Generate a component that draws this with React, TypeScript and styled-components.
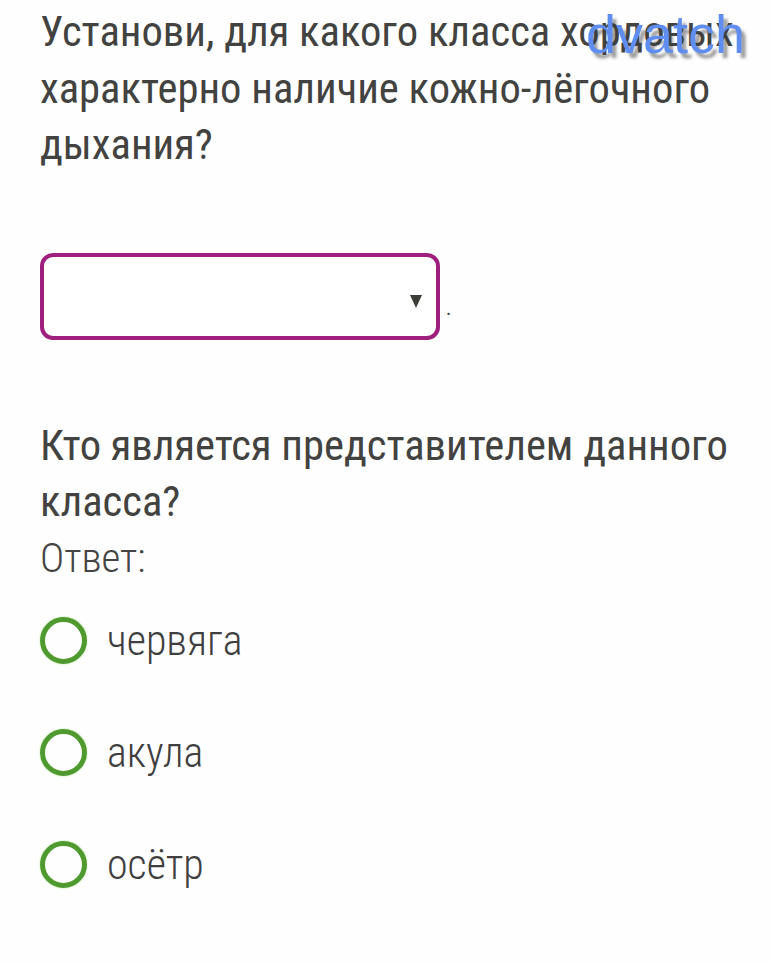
import React from "react";
import styled, { createGlobalStyle } from "styled-components";

const Global = createGlobalStyle`
  html, body { margin: 0; padding: 0; background: #fefefe; }
  body { font-family: "Roboto Condensed", Roboto, "Liberation Sans", sans-serif; }
`;

const Page = styled.div`
  position: relative;
  width: 770px;
  height: 965px;
  box-sizing: border-box;
  padding: 3px 0 0 40px;
  color: #3b3b3b;
  overflow: hidden;
`;

const Question = styled.p`
  margin: 0;
  font-size: 42.6px;
  line-height: 56.5px;
  font-weight: 400;
  color: #424240;
  white-space: nowrap;
`;

const SelectRow = styled.div`
  display: flex;
  align-items: flex-end;
  margin-top: 80px;
  gap: 6px;
`;

const SelectBox = styled.div`
  box-sizing: border-box;
  width: 400px;
  height: 87px;
  border: 4px solid #9e1f7e;
  border-radius: 13px;
  background: #fff;
  display: flex;
  align-items: center;
  justify-content: flex-end;
  padding-right: 14px;
`;

const Arrow = styled.div`
  width: 0;
  height: 0;
  border-left: 6px solid transparent;
  border-right: 6px solid transparent;
  border-top: 13px solid #3d3d38;
  margin-top: 10px;
`;

const Dot = styled.span`
  font-size: 20px;
  line-height: 20px;
  color: #444;
  padding-bottom: 22px;
`;

const Question2 = styled(Question)`
  margin-top: 77px;
`;

const Answer = styled.div`
  font-size: 41px;
  line-height: 56.5px;
  font-weight: 300;
  color: #444;
`;

const Options = styled.div`
  display: flex;
  flex-direction: column;
  gap: 65px;
  margin-top: 31px;
`;

const Option = styled.label`
  display: flex;
  align-items: center;
  gap: 20px;
  height: 47px;
`;

const Radio = styled.span`
  box-sizing: border-box;
  width: 47px;
  height: 47px;
  border-radius: 50%;
  border: 5px solid #4e9a2e;
  box-shadow: 0 0 2px rgba(120, 220, 80, 0.6);
  flex: none;
`;

const OptionText = styled.span`
  font-size: 42px;
  font-weight: 300;
  color: #3f3f3f;
  line-height: 47px;
`;

const Watermark = styled.div`
  position: absolute;
  left: 586px;
  top: 7px;
  font-family: "Liberation Sans", Arial, sans-serif;
  font-size: 54px;
  line-height: 54px;
  color: #5f8ef0;
  text-shadow: 4px 5px 3px rgba(60, 60, 60, 0.5);
`;

export default function App() {
  return (
    <>
      <Global />
      <Page>
        <Question>
          Установи, для какого класса хордовых
          <br />
          характерно наличие кожно-лёгочного
          <br />
          дыхания?
        </Question>
        <SelectRow>
          <SelectBox>
            <Arrow />
          </SelectBox>
          <Dot>.</Dot>
        </SelectRow>
        <Question2>
          Кто является представителем данного
          <br />
          класса?
        </Question2>
        <Answer>Ответ:</Answer>
        <Options>
          {["червяга", "акула", "осётр"].map((t) => (
            <Option key={t}>
              <Radio />
              <OptionText>{t}</OptionText>
            </Option>
          ))}
        </Options>
        <Watermark>dvatch</Watermark>
      </Page>
    </>
  );
}
